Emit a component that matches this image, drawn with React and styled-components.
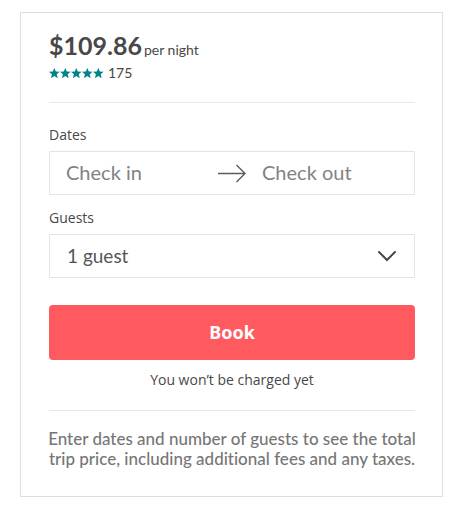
import React from "react";
import styled, { createGlobalStyle } from "styled-components";

const GlobalStyle = createGlobalStyle`
  *, *::before, *::after { box-sizing: border-box; }
  body {
    margin: 0;
    background: #fff;
    color: #484848;
    font-family: "Open Sans", "Noto Sans", sans-serif;
    font-size: 14px;
    font-variant-ligatures: none;
    line-height: 20px;
  }
`;

const Card = styled.form`
  margin: 12px 19px 16px 20px;
  padding: 16px 27px 27px 28px;
  border: 1px solid #dfdfdf;
  background: #fff;
`;

const PriceRow = styled.div`
  display: flex;
  align-items: baseline;
  gap: 2px;
  margin-bottom: 2px;
`;

const Price = styled.strong`
  font-family: Lato, sans-serif;
  font-size: 25px;
  font-weight: 700;
  line-height: 32px;
`;

const Unit = styled.span`
  font-family: Lato, sans-serif;
`;

const Rating = styled.div`
  display: flex;
  align-items: center;
  gap: 4px;
  font-family: Lato, sans-serif;
`;

const Stars = styled.svg`
  width: 55px;
  height: 11px;
  fill: #008489;
`;

const Divider = styled.hr`
  height: 1px;
  margin: ${({ $space }) => $space};
  border: 0;
  background: #e8e8e8;
`;

const Field = styled.fieldset`
  min-width: 0;
  margin: 0 0 13px;
  padding: 0;
  border: 0;
`;

const Label = styled.label`
  display: block;
  margin-bottom: 6px;
`;

const Box = styled.div`
  display: flex;
  align-items: center;
  height: 44px;
  border: 1px solid #e4e4e4;
`;

const DateInput = styled.input`
  flex: 1 1 0;
  min-width: 0;
  height: 100%;
  padding: 0 0 2px 16px;
  border: 0;
  background: transparent;
  color: #484848;
  font-family: Lato, sans-serif;
  font-size: 20px;
  &::placeholder { color: #828282; opacity: 1; }
`;

const Arrow = styled.svg`
  flex: none;
  width: 28px;
  height: 20px;
  fill: none;
  stroke: #5c5c5c;
  stroke-width: 1.4;
`;

const SelectBox = styled.div`
  display: grid;
  height: 44px;
  align-items: center;
`;

const Select = styled.select`
  grid-area: 1 / 1;
  width: 100%;
  height: 100%;
  padding: 0 48px 2px 17px;
  border: 1px solid #e4e4e4;
  border-radius: 0;
  appearance: none;
  background: #fff;
  color: #565656;
  font-family: Lato, sans-serif;
  font-size: 19px;
`;

const Chevron = styled.svg`
  grid-area: 1 / 1;
  justify-self: end;
  width: 20px;
  height: 12px;
  margin-right: 18px;
  fill: none;
  stroke: #484848;
  stroke-width: 2;
  stroke-linecap: round;
  pointer-events: none;
`;

const BookButton = styled.button`
  display: block;
  width: 100%;
  height: 55px;
  margin-top: 27px;
  padding-bottom: 3px;
  border: 0;
  border-radius: 4px;
  background: #ff5a5f;
  color: #fff;
  font-family: "Noto Sans", sans-serif;
  font-size: 18px;
  font-weight: 700;
`;

const Notice = styled.p`
  margin: 10px 0 0;
  text-align: center;
`;

const Hint = styled.p`
  margin: 0 -4px;
  color: #767676;
  font-family: Lato, sans-serif;
  font-size: 17px;
  font-weight: 500;
  text-align: center;
`;

const starOffsets = [0, 11, 22, 33, 44];

export default function App() {
  return (
    <>
      <GlobalStyle />
      <Card onSubmit={(event) => event.preventDefault()}>
        <PriceRow>
          <Price>$109.86</Price>
          <Unit>per night</Unit>
        </PriceRow>
        <Rating>
          <Stars viewBox="0 0 55 11" role="img" aria-label="5 stars">
            {starOffsets.map((x) => (
              <path
                key={x}
                transform={`translate(${x} 0)`}
                d="M5.3 0.1 6.8 3.6 10.6 3.8 7.7 6.3 8.7 10.2 5.3 8.1 1.9 10.2 2.9 6.3 0 3.8 3.8 3.6Z"
              />
            ))}
          </Stars>
          <span>175</span>
        </Rating>
        <Divider $space="19px 0 22px" />
        <Field>
          <Label htmlFor="check-in">Dates</Label>
          <Box>
            <DateInput id="check-in" placeholder="Check in" />
            <Arrow viewBox="0 0 28 20" aria-hidden="true">
              <path d="M0 10.5H27M18.5 2 27 10.5 18.5 19" />
            </Arrow>
            <DateInput id="check-out" placeholder="Check out" aria-label="Check out" />
          </Box>
        </Field>
        <Field>
          <Label htmlFor="guests">Guests</Label>
          <SelectBox>
            <Select id="guests" defaultValue="1">
              <option value="1">1 guest</option>
              <option value="2">2 guests</option>
              <option value="3">3 guests</option>
            </Select>
            <Chevron viewBox="0 0 20 12" aria-hidden="true">
              <path d="M2 2 10 10 18 2" />
            </Chevron>
          </SelectBox>
        </Field>
        <BookButton type="submit">Book</BookButton>
        <Notice>You won’t be charged yet</Notice>
        <Divider $space="20px 0 18px" />
        <Hint>
          Enter dates and number of guests to see the total trip price, including additional fees and any taxes.
        </Hint>
      </Card>
    </>
  );
}
